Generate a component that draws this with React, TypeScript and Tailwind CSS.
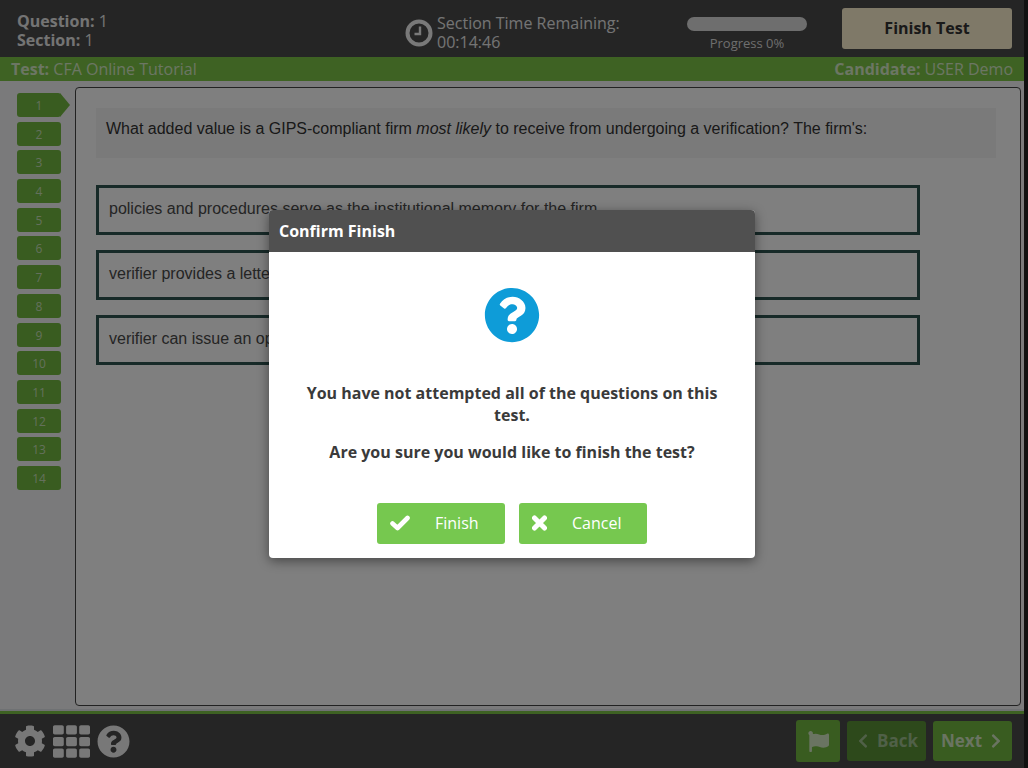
import { FaChevronLeft, FaChevronRight, FaCog, FaFlag, FaQuestionCircle, FaTh } from "react-icons/fa";

const questions = [1, 2, 3, 4, 5, 6, 7, 8, 9, 10, 11, 12, 13, 14];
const options = [
  "policies and procedures serve as the institutional memory for the firm.",
  "verifier provides a letter stating the firm's composites are accurately presented.",
  "verifier can issue an opinion on the performance record of a specific composite.",
];

function ClockIcon() {
  return (
    <svg width="28" height="28" viewBox="0 0 28 28" className="shrink-0">
      <circle cx="14" cy="14" r="11.5" fill="none" stroke="#f2f2f2" strokeWidth="4" />
      <path d="M15 7.5v7.5H9.5" fill="none" stroke="#f2f2f2" strokeWidth="2.4" />
    </svg>
  );
}

function CheckIcon() {
  return (
    <svg width="20" height="16" viewBox="0 0 20 16" className="shrink-0">
      <path d="M2.5 8.5 7.5 13 17.5 3" fill="none" stroke="white" strokeWidth="4.6" strokeLinejoin="round" strokeLinecap="round" />
    </svg>
  );
}

function CrossIcon() {
  return (
    <svg width="15" height="16" viewBox="0 0 15 16" className="shrink-0">
      <path d="M2.5 3 12.5 13M12.5 3 2.5 13" fill="none" stroke="white" strokeWidth="5" strokeLinecap="round" />
    </svg>
  );
}

function Header() {
  return (
    <div className="flex h-[57px] shrink-0 items-center bg-[#4a4a4a] text-white">
      <div className="mt-[4px] w-[405px] pl-[17px] text-[16px] leading-[19px] text-[#e8e8e8]">
        <p><span className="font-bold">Question:</span> 1</p>
        <p><span className="font-bold">Section:</span> 1</p>
      </div>
      <div className="mt-[8px] flex w-[282px] items-center gap-[4px]">
        <ClockIcon />
        <p className="text-[16px] leading-[19px] text-[#e8e8e8]">Section Time Remaining:<br />00:14:46</p>
      </div>
      <div className="mt-[12px] flex w-[120px] flex-col items-center">
        <div className="h-[14px] w-[120px] rounded-[7px] bg-[#dcdcdc]" />
        <p className="mt-[3px] text-[13px] leading-[18px] text-[#dcdcdc]">Progress 0%</p>
      </div>
      <div className="-mt-[1px] ml-[35px] flex h-[41px] w-[170px] items-center justify-center rounded-[3px] bg-[#fff3d0] text-[16px] font-bold text-[#333]">
        Finish Test
      </div>
    </div>
  );
}

function Sidebar() {
  return (
    <div className="flex w-[75px] shrink-0 flex-col gap-[4.7px] pl-[17px] pt-[12px]">
      {questions.map((n) => (
        <div key={n} className="relative flex h-[24px] w-[44px] items-center justify-center rounded-[3px] bg-[#72b840] pt-[2px] text-[12px] text-[#c8e0b8]">
          {n}
          {n === 1 && (
            <div className="absolute left-[43px] top-0 h-0 w-0 border-y-[12px] border-l-[10px] border-y-transparent border-l-[#72b840]" />
          )}
        </div>
      ))}
    </div>
  );
}

function Question() {
  return (
    <div className="mb-[3px] mr-[3px] mt-[6px] flex-1 rounded-[4px] border border-[#444] bg-[#fefefe] pl-[20px] pr-[24px] pt-[20px] font-['Liberation_Sans',sans-serif] text-[16px] text-[#333]">
      <div className="h-[50px] bg-[#f5f5f5] pl-[10px] pt-[10px] leading-[22px]">
        What added value is a GIPS-compliant firm <em>most likely</em> to receive from undergoing a verification? The firm's:
      </div>
      <div className="mt-[27px] flex w-[824px] flex-col gap-[15px]">
        {options.map((o) => (
          <div key={o} className="flex h-[50px] items-center border-[3px] border-[#2f5450] pl-[10px] text-[#4a4a4a]">
            <span className="-mt-[2px]">{o}</span>
          </div>
        ))}
      </div>
    </div>
  );
}

function Footer() {
  return (
    <div className="shrink-0">
      <div className="h-[2px] bg-[#dfe3e6]" />
      <div className="h-[3px] bg-[#7cc447]" />
      <div className="flex h-[54px] items-center bg-[#4a4a4a] pl-[14px] pr-[12px]">
        <FaCog className="text-[32px] text-[#f0f0f0]" />
        <FaTh className="ml-[7px] text-[37px] text-[#f0f0f0]" />
        <FaQuestionCircle className="ml-[7px] text-[33px] text-[#f0f0f0]" />
        <div className="ml-auto flex items-center gap-[7px] text-[17px] font-bold text-[#d4e8c4]">
          <div className="flex h-[42px] w-[44px] items-center justify-center rounded-[3px] bg-[#72b840]">
            <FaFlag className="text-[21px]" />
          </div>
          <div className="flex h-[40px] w-[79px] items-center justify-center gap-[6px] rounded-[3px] bg-[#5a9236] text-[#a0c090]">
            <FaChevronLeft className="text-[16px]" />
            Back
          </div>
          <div className="flex h-[40px] w-[79px] items-center justify-center gap-[6px] rounded-[3px] bg-[#72b840]">
            Next
            <FaChevronRight className="text-[16px]" />
          </div>
        </div>
      </div>
    </div>
  );
}

function ConfirmModal() {
  return (
    <div className="absolute inset-0 flex justify-center bg-black/50 pt-[210px]">
      <div className="h-[348px] w-[486px] overflow-hidden rounded-[4px] bg-white shadow-[0_3px_12px_rgba(0,0,0,0.45)]">
        <div className="flex h-[42px] items-center bg-[#505050] pl-[10px] text-[16px] font-bold text-white">Confirm Finish</div>
        <div className="flex flex-col items-center">
          <FaQuestionCircle className="mt-[35px] text-[56px] text-[#0e9cd8]" />
          <p className="mt-[39px] w-[420px] text-center text-[16px] font-bold leading-[22px] text-[#3a3a3a]">
            You have not attempted all of the questions on this test.
          </p>
          <p className="mt-[15px] text-center text-[16px] font-bold leading-[22px] text-[#3a3a3a]">
            Are you sure you would like to finish the test?
          </p>
          <div className="mt-[40px] flex gap-[14px] text-[16px] text-white">
            <div className="flex h-[41px] w-[128px] items-center gap-[25px] rounded-[3px] bg-[#76c84f] pb-[1px] pl-[13px]">
              <CheckIcon />
              Finish
            </div>
            <div className="flex h-[41px] w-[128px] items-center gap-[25px] rounded-[3px] bg-[#76c84f] pb-[1px] pl-[13px]">
              <CrossIcon />
              Cancel
            </div>
          </div>
        </div>
      </div>
    </div>
  );
}

export default function App() {
  return (
    <div className="flex h-[768px] w-[1028px] overflow-hidden bg-[#111] font-['Open_Sans',sans-serif]">
      <div className="relative flex h-full w-[1024px] flex-col bg-[#f4f4f6]">
        <Header />
        <div className="flex h-[24px] shrink-0 items-center justify-between bg-[#7cc447] pl-[11px] pr-[11px] text-[16px] text-[#d8ecc8]">
          <p><span className="font-bold">Test:</span> CFA Online Tutorial</p>
          <p><span className="font-bold">Candidate:</span> USER Demo</p>
        </div>
        <div className="flex min-h-0 flex-1">
          <Sidebar />
          <Question />
        </div>
        <Footer />
        <ConfirmModal />
      </div>
    </div>
  );
}
